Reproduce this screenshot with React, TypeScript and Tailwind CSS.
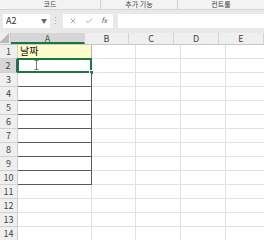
import { Check, X } from "lucide-react";

const COLS = [
  { key: "A", w: "w-[74px]" },
  { key: "B", w: "w-[44px]" },
  { key: "C", w: "w-[45px]" },
  { key: "D", w: "w-[45px]" },
  { key: "E", w: "w-[45px]" },
];

const ROWS = Array.from({ length: 14 }, (_, i) => i + 1);

function TopStrip() {
  return (
    <div className="flex h-[10px] bg-[#f3f3f3] border-b border-[#d6d6d6] text-[7px] leading-[9px] text-[#444]">
      <div className="w-[101px] border-r border-[#d0d0d0] text-center">코드</div>
      <div className="w-[77px] border-r border-[#d0d0d0] text-center">추가 기능</div>
      <div className="flex-1 text-center">컨트롤</div>
    </div>
  );
}

function FormulaBar() {
  return (
    <div className="flex h-[23px] items-center bg-[#e9e9e9] pt-[1px] pb-[3px]">
      <div className="ml-[3px] flex h-[14px] w-[47px] items-center justify-between bg-white px-[3px] text-[9px] text-[#333]">
        <span>A2</span>
        <span className="text-[6px] text-[#666]">▼</span>
      </div>
      <div className="ml-[5px] flex w-[2px] flex-col gap-[2px]">
        <span className="h-[1px] w-[1px] bg-[#aaa]" />
        <span className="h-[1px] w-[1px] bg-[#aaa]" />
        <span className="h-[1px] w-[1px] bg-[#aaa]" />
      </div>
      <div className="ml-[6px] flex h-[14px] w-[50px] items-center justify-around bg-white px-[2px] text-[#555]">
        <X size={8} strokeWidth={1.5} />
        <Check size={8} strokeWidth={1.5} />
        <span className="text-[7px] italic leading-none">fx</span>
      </div>
      <div className="ml-[5px] h-[14px] flex-1 bg-white" />
    </div>
  );
}

function HeaderRow() {
  return (
    <div className="flex h-[12px] border-b border-[#c8c8c8] bg-[#efefef] text-[9px] leading-[11px] text-[#444]">
      <div className="relative w-[18px] border-r border-[#c8c8c8]">
        <svg className="absolute bottom-[1px] right-[1px]" width="10" height="10">
          <polygon points="10,0 10,10 0,10" fill="#b8b8b8" />
        </svg>
      </div>
      {COLS.map((c) => (
        <div
          key={c.key}
          className={`${c.w} shrink-0 border-r border-[#d4d4d4] text-center ${
            c.key === "A" ? "bg-[#d6d6d6] text-[#1e6b41] border-b-2 border-b-[#217346]" : ""
          }`}
        >
          {c.key}
        </div>
      ))}
    </div>
  );
}

function Row({ n }: { n: number }) {
  const selected = n === 2;
  const bordered = n <= 10;
  return (
    <div className="flex h-[14px]">
      <div
        className={`w-[18px] shrink-0 border-b border-r border-[#d0d0d0] text-center text-[9px] leading-[13px] text-[#444] ${
          selected ? "bg-[#d6d6d6] text-[#1e6b41] border-r-2 border-r-[#217346]" : "bg-[#efefef]"
        }`}
      >
        {n}
      </div>
      <div
        className={`relative w-[74px] shrink-0 ${
          bordered ? "border-b border-r border-[#5a5a5a]" : "border-b border-r border-[#e1e1e1]"
        } ${n === 1 ? "bg-[#fdfdcc] border-[#b8b8a0]" : "bg-white"}`}
      >
        {n === 1 && (
          <span className="absolute left-[2px] top-[-1px] text-[10px] leading-[14px] text-[#111]">날짜</span>
        )}
        {selected && (
          <>
            <div className="absolute -left-[1px] -top-[1px] -right-[1px] -bottom-[1px] border-2 border-[#217346]" />
            <div className="absolute -bottom-[3px] -right-[3px] h-[5px] w-[5px] border border-white bg-[#217346]" />
            <svg className="absolute left-[16px] top-[1px]" width="5" height="10" viewBox="0 0 5 10">
              <path d="M0.5 0.5h4M2.5 0.5v9M0.5 9.5h4" stroke="#777" strokeWidth="1" fill="none" />
            </svg>
          </>
        )}
      </div>
      {COLS.slice(1).map((c) => (
        <div key={c.key} className={`${c.w} shrink-0 border-b border-r border-[#e1e1e1] bg-white`} />
      ))}
    </div>
  );
}

export default function App() {
  return (
    <div className="h-[240px] w-[264px] overflow-hidden bg-white font-['Noto_Sans_CJK_KR','Liberation_Sans',sans-serif]">
      <TopStrip />
      <FormulaBar />
      <HeaderRow />
      {ROWS.map((n) => (
        <Row key={n} n={n} />
      ))}
    </div>
  );
}
